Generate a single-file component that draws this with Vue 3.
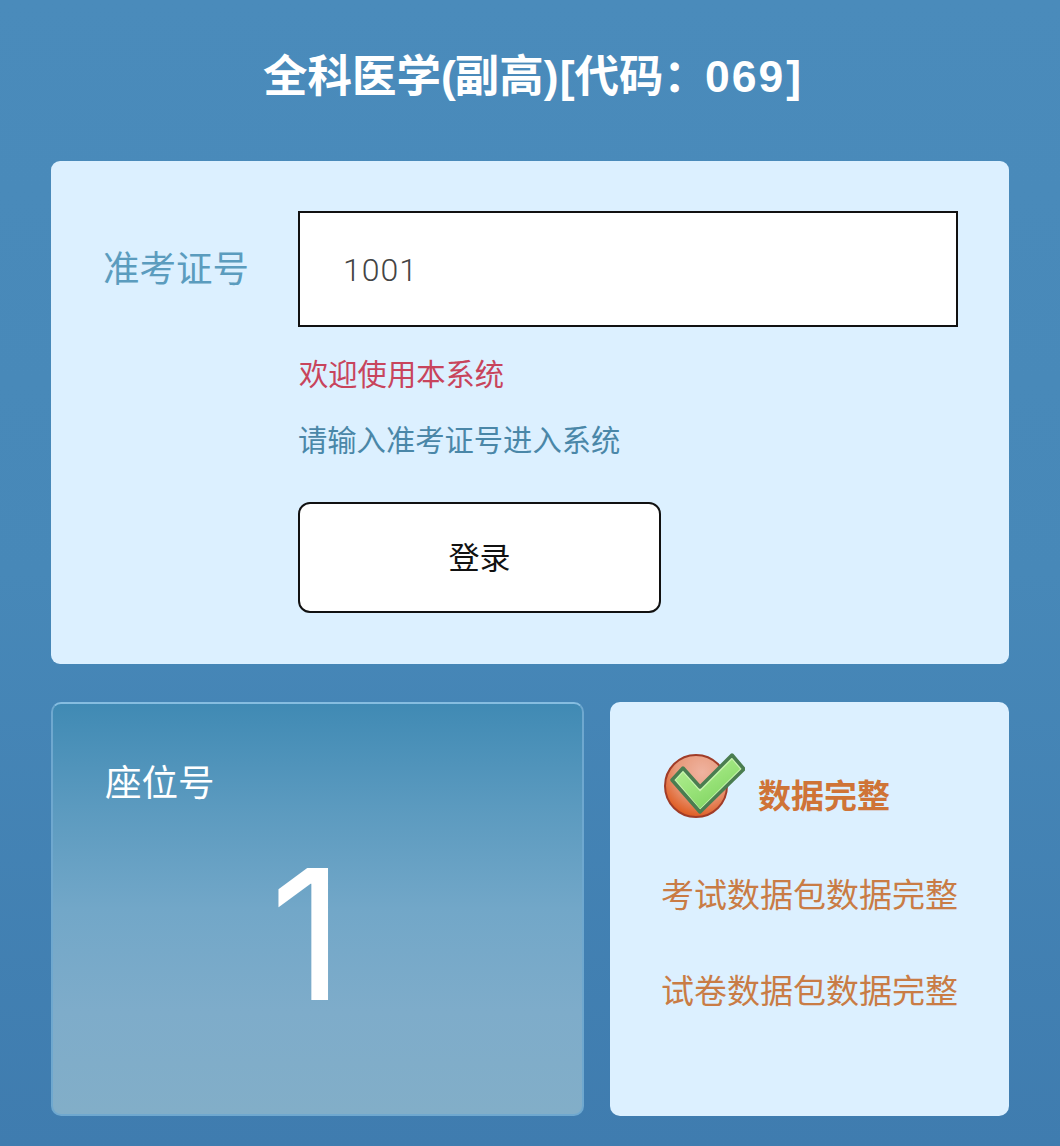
<script setup>
</script>

<template>
  <div class="page">
    <h1 class="title">全科医学<span class="open">(</span>副高<span class="close">)</span>[代码<span class="colon">：</span><span class="code">069</span>]</h1>

    <section class="login">
      <div class="label">准考证号</div>
      <div class="form">
        <div class="input">1001</div>
        <p class="welcome">欢迎使用本系统</p>
        <p class="hint">请输入准考证号进入系统</p>
        <button class="btn" type="button">登录</button>
      </div>
    </section>

    <div class="bottom">
      <section class="seat">
        <div class="seat-label">座位号</div>
        <div class="seat-num">1</div>
      </section>
      <section class="status">
        <div class="status-head">
          <svg class="check" viewBox="0 0 82 68" width="82" height="68" aria-hidden="true">
            <defs>
              <radialGradient id="ball" cx="0.6" cy="0.28" r="0.85">
                <stop offset="0" stop-color="#efb3a0" />
                <stop offset="0.5" stop-color="#e8997a" />
                <stop offset="0.82" stop-color="#e0622a" />
                <stop offset="1" stop-color="#c44a1e" />
              </radialGradient>
              <linearGradient id="tick" x1="0" y1="0" x2="0.7" y2="1">
                <stop offset="0" stop-color="#b8f098" />
                <stop offset="0.55" stop-color="#98e278" />
                <stop offset="1" stop-color="#7fd360" />
              </linearGradient>
            </defs>
            <circle cx="33" cy="34" r="31" fill="url(#ball)" stroke="#a03c28" stroke-width="2" />
            <path d="M9 28 L20 16 L37 35 L69 3 L81 17 L37 60 Z" fill="#c8f4ae" stroke="#4a7d50" stroke-width="3.500" stroke-linejoin="round" />
            <path d="M13 28 L20 20.500 L37 39.500 L69 7.500 L77 17 L37 56.500 Z" fill="url(#tick)" />
          </svg>
          <span class="status-title">数据完整</span>
        </div>
        <p class="status-line">考试数据包数据完整</p>
        <p class="status-line">试卷数据包数据完整</p>
      </section>
    </div>
  </div>
</template>

<style scoped>
.page {
  box-sizing: border-box;
  width: 1060px;
  height: 1146px;
  padding: 0 51px;
  overflow: hidden;
  background: linear-gradient(180deg, #4a8bbb 0%, #4788b8 50%, #3f7caf 100%);
  font-family: "Liberation Sans", "Noto Sans CJK SC", sans-serif;
}
.title {
  margin: 0;
  height: 161px;
  padding: 47px 0 0 4px;
  box-sizing: border-box;
  text-align: center;
  color: #fff;
  font-size: 44.500px;
  line-height: 60px;
  font-weight: 700;
  white-space: nowrap;
}
.open {
  letter-spacing: -1px;
}
.close {
  letter-spacing: 1px;
}
.colon {
  letter-spacing: -3px;
}
.code {
  letter-spacing: 2px;
  margin-right: 1px;
}
.login {
  box-sizing: border-box;
  height: 503px;
  display: flex;
  padding: 50px 51px 0 52px;
  background: #dcf0ff;
  border-radius: 9px;
}
.label {
  width: 195px;
  flex: none;
  padding-top: 34px;
  color: #5b9cbe;
  font-size: 36.500px;
  line-height: 50px;
}
.form {
  flex: 1;
  min-width: 0;
}
.input {
  box-sizing: border-box;
  height: 116px;
  padding: 2px 0 0 43px;
  display: flex;
  align-items: center;
  background: #fff;
  border: 2px solid #111;
  color: #444;
  font-family: Roboto, "Liberation Sans", sans-serif;
  font-size: 32px;
  font-weight: 300;
  letter-spacing: 1px;
}
.welcome,
.hint {
  margin: 0;
  font-size: 29.300px;
  line-height: 40px;
}
.welcome {
  margin-top: 28px;
  color: #c8445c;
  padding-left: 1px;
}
.hint {
  margin-top: 26px;
  color: #4a87a8;
}
.btn {
  display: block;
  box-sizing: border-box;
  width: 363px;
  height: 111px;
  margin-top: 41px;
  padding: 0 0 4px;
  background: #fff;
  border: 2px solid #111;
  border-radius: 12px;
  color: #111;
  font-family: inherit;
  font-size: 31px;
}
.bottom {
  display: flex;
  gap: 26px;
  height: 414px;
  margin-top: 38px;
}
.seat {
  box-sizing: border-box;
  width: 533px;
  flex: none;
  padding: 55px 0 0 52px;
  background: linear-gradient(180deg, #408ab4 0%, #5b9abf 25%, #72a7c8 50%, #7eacca 75%, #82aec8 100%);
  border: 2px solid #6fa8cf;
  border-top-color: #86bde0;
  border-radius: 10px;
  color: #fff;
}
.seat-label {
  font-size: 36.500px;
  line-height: 50px;
}
.seat-num {
  margin: 15px 0 0 -52px;
  width: 508px;
  text-align: center;
  font-family: Inter, Roboto, sans-serif;
  font-size: 182px;
  line-height: 220px;
}
.status {
  flex: 1;
  min-width: 0;
  box-sizing: border-box;
  padding: 50px 0 0 51px;
  background: #dcf0ff;
  border-radius: 10px;
}
.status-head {
  display: flex;
  align-items: flex-start;
  gap: 13px;
  height: 68px;
}
.check {
  flex: none;
  margin-left: 2px;
  filter: blur(0.4px);
}
.status-title {
  margin-top: 23px;
  color: #cf7437;
  font-size: 33px;
  line-height: 44px;
  font-weight: 700;
}
.status-line {
  margin: 0;
  color: #c97c45;
  font-size: 33px;
  line-height: 44px;
  white-space: nowrap;
}
.status-head + .status-line {
  margin-top: 54px;
}
.status-line + .status-line {
  margin-top: 52px;
}
</style>
